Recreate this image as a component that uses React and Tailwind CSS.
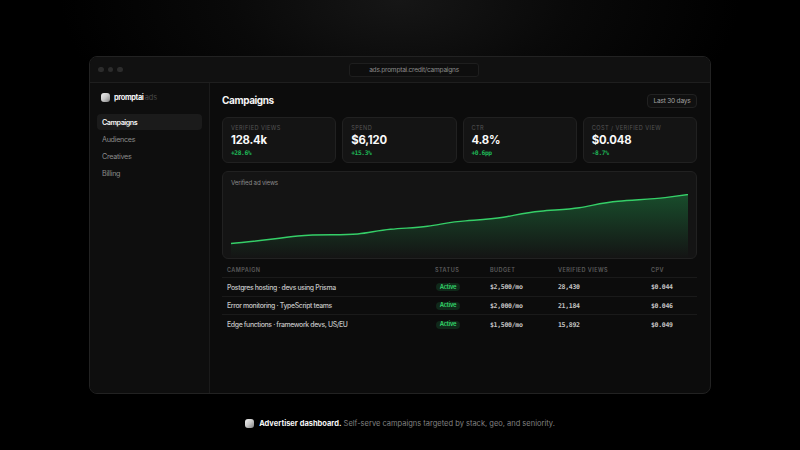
import React from 'react';

const NAV = ['Campaigns', 'Audiences', 'Creatives', 'Billing'];

const STATS = [
  { label: 'Verified views', value: '128.4k', delta: '+28.6%' },
  { label: 'Spend', value: '$6,120', delta: '+15.3%' },
  { label: 'CTR', value: '4.8%', delta: '+0.6pp' },
  { label: 'Cost / verified view', value: '$0.048', delta: '-8.7%' },
];

const CAMPAIGNS = [
  { name: 'Postgres hosting · devs using Prisma', budget: '$2,500/mo', views: '28,430', cpv: '$0.044' },
  { name: 'Error monitoring · TypeScript teams', budget: '$2,000/mo', views: '21,184', cpv: '$0.046' },
  { name: 'Edge functions · framework devs, US/EU', budget: '$1,500/mo', views: '15,892', cpv: '$0.049' },
];

const LINE =
  'M0 49.5 C22 48 45 44.2 67 42 C90 39.8 108 41.6 127 40 C139 38.8 147 36.4 160 35.3 C174 34 184 34 197 32.3 C211 30.3 221 27.8 235 26.9 C248 25.9 260 25.4 273 23.3 C287 20.8 295 18.4 310 17.2 C323 15.9 336 15.8 349 13.8 C363 11.4 373 8.5 388 7.3 C402 5.9 420 5.3 435 3.6 L458 0.5';

function Logo() {
  return (
    <span className="block size-[9px] shrink-0 rounded-[3px] bg-linear-to-br from-[#f0f0f0] via-[#c8c8c8] to-[#808080]" />
  );
}

function StatCard({ label, value, delta }) {
  return (
    <div className="flex h-[46px] flex-col rounded-[6px] border border-[#212121] bg-[#141414] px-2 pt-[6px]">
      <span className="whitespace-nowrap text-[5.6px] leading-[8px] tracking-[0.42px] text-[#555] uppercase">{label}</span>
      <span className="mt-[2px] text-[11.3px] leading-[13px] font-bold tracking-[-0.2px] text-neutral-50">{value}</span>
      <span className="mt-[2px] font-['DejaVu_Sans_Mono',monospace] text-[6.3px] leading-[7px] font-bold tracking-[-0.42px] text-[#1fb556]">{delta}</span>
    </div>
  );
}

function ViewsChart() {
  return (
    <div className="mt-2 h-[88px] rounded-[6px] border border-[#212121] bg-[#141414] px-2 pt-[6px]">
      <div className="pt-[1px] text-[6.2px] leading-[8px] tracking-[-0.2px] text-[#8a8a8a]">Verified ad views</div>
      <svg viewBox="0 0 458 64" className="mt-[7px] block h-16 w-full" preserveAspectRatio="none" fill="none">
        <defs>
          <linearGradient id="views" x1="0" y1="0" x2="0" y2="1">
            <stop offset="0" stopColor="#22c55e" stopOpacity="0.32" />
            <stop offset="1" stopColor="#22c55e" stopOpacity="0" />
          </linearGradient>
        </defs>
        <path d={`${LINE} V64 H0 Z`} fill="url(#views)" />
        <path d={LINE} stroke="#35cf68" strokeWidth="1.4" />
      </svg>
    </div>
  );
}

function CampaignTable() {
  const cols = 'grid grid-cols-[208px_55px_68px_93px_1fr] items-center pl-[5px]';
  const mono = "font-['DejaVu_Sans_Mono',monospace] text-[6.5px] leading-[8px] font-bold tracking-[-0.3px]";
  return (
    <div>
      <div className={`${cols} h-[19px] border-b border-[#1a1a1a] pt-[5px] text-[5.5px] font-semibold tracking-[0.44px] text-[#5c5c5c] uppercase`}>
        <span>Campaign</span>
        <span>Status</span>
        <span>Budget</span>
        <span>Verified views</span>
        <span>CPV</span>
      </div>
      {CAMPAIGNS.map((c) => (
        <div key={c.name} className={`${cols} h-[18.5px] border-b border-[#1a1a1a] pt-[1px] text-[#c4c4c4] last:border-b-0`}>
          <span className="pt-[1px] text-[6.9px] font-medium tracking-[-0.35px]">{c.name}</span>
          <span className="ml-[1px] flex h-2 w-6 items-center justify-center rounded-full bg-[#10291a] text-[5.8px] font-semibold tracking-[-0.25px] text-[#35d96d]">
            Active
          </span>
          <span className={mono}>{c.budget}</span>
          <span className={mono}>{c.views}</span>
          <span className={mono}>{c.cpv}</span>
        </div>
      ))}
    </div>
  );
}

export default function App() {
  return (
    <div className="flex h-screen w-screen flex-col items-center overflow-hidden bg-black bg-[radial-gradient(340px_170px_at_50%_0%,#161616_0%,#090909_50%,#000_100%)] pt-14 font-[Inter,sans-serif]">
      {/* Browser window */}
      <div className="flex h-[338px] w-[622px] shrink-0 flex-col overflow-hidden rounded-[8px] border border-[#222] bg-[#0c0c0c]">
        <div className="flex h-[26px] shrink-0 items-center border-b border-[#1f1f1f] bg-[#111] px-2">
          <div className="flex w-[251px] gap-1">
            <span className="size-[5.5px] rounded-full bg-[#2c2c2c]" />
            <span className="size-[5.5px] rounded-full bg-[#2c2c2c]" />
            <span className="size-[5.5px] rounded-full bg-[#2c2c2c]" />
          </div>
          <div className="flex h-[14px] w-[130px] items-center justify-center rounded-[3px] border border-[#1e1e1e] bg-[#0e0e0e] pt-[2px] text-[6.6px] tracking-[-0.25px] text-[#8a8a8a]">
            ads.promptai.credit/campaigns
          </div>
        </div>

        <div className="flex min-h-0 flex-1">
          <aside className="w-[120px] shrink-0 border-r border-[#1b1b1b] bg-[#0e0e0e] px-[7px] pt-[10px]">
            <div className="flex h-[9px] items-center gap-[4px] pl-[4px]">
              <Logo />
              <span className="pt-[1px] text-[7.4px] font-bold tracking-[-0.38px] text-neutral-100">
                promptai <span className="font-normal tracking-[-0.1px] text-[#484848]">ads</span>
              </span>
            </div>
            <nav className="mt-[12px] flex flex-col gap-[1px]">
              {NAV.map((item, i) => (
                <a
                  key={item}
                  className={`flex h-4 items-center rounded-[4px] pt-[2px] pl-[5px] text-[7.2px] ${
                    i === 0 ? 'bg-[#1b1b1b] font-semibold tracking-[-0.45px] text-neutral-100' : 'tracking-[-0.3px] text-[#8c8c8c]'
                  }`}
                >
                  {item}
                </a>
              ))}
            </nav>
          </aside>

          <main className="min-w-0 flex-1 pt-[11px] pr-[13px] pl-[12px]">
            <div className="flex h-[14px] items-center justify-between">
              <h1 className="-mt-[3px] text-[10px] leading-3 font-bold tracking-[-0.4px] text-neutral-100">Campaigns</h1>
              <span className="flex h-[14px] w-[50px] items-center justify-center rounded-[4px] border border-[#212121] bg-[#101010] pt-[2px] text-[6.6px] tracking-[-0.25px] text-[#a0a0a0]">
                Last 30 days
              </span>
            </div>
            <div className="mt-[9px] grid grid-cols-4 gap-[6px]">
              {STATS.map((s) => (
                <StatCard key={s.label} {...s} />
              ))}
            </div>
            <ViewsChart />
            <CampaignTable />
          </main>
        </div>
      </div>

      {/* Caption */}
      <div className="mt-[24px] flex h-[10px] items-center gap-[5px] text-[7.5px]">
        <Logo />
        <p className="pt-[1px] whitespace-nowrap text-[#808080]">
          <span className="font-bold text-neutral-100">Advertiser dashboard.</span> Self-serve campaigns targeted by stack, geo, and seniority.
        </p>
      </div>
    </div>
  );
}
